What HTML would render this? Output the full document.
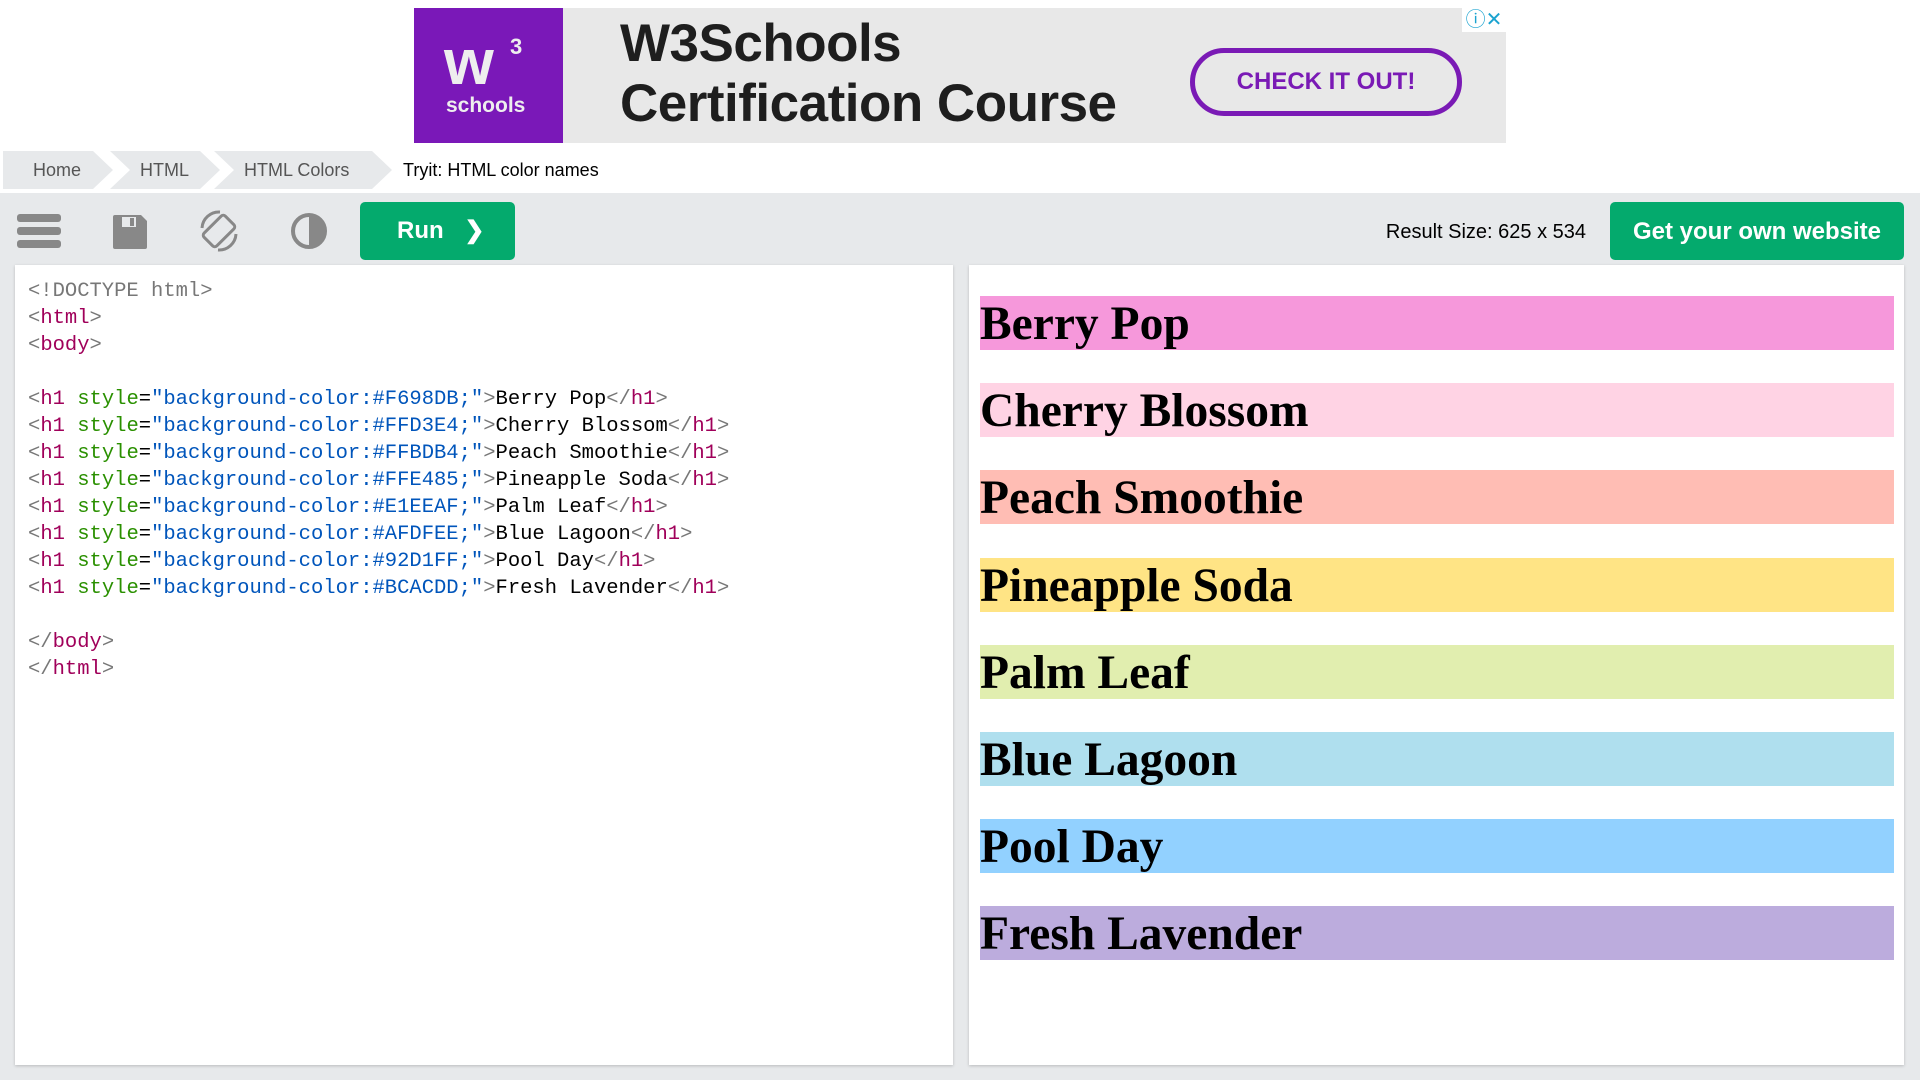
<!DOCTYPE html>
<html><head><style>
*{box-sizing:border-box;margin:0;padding:0}
body{width:1920px;height:1080px;background:#fff;position:relative;overflow:hidden;font-family:"Liberation Sans",sans-serif}
.abs{position:absolute}
.ad{left:414px;top:8px;width:1092px;height:135px;background:#e8e8e8}
.bc{top:151px;height:38px;background:#e7e9eb;color:#555;font-size:18px;line-height:38px;padding-left:30px;clip-path:polygon(0 0,calc(100% - 20px) 0,100% 50%,calc(100% - 20px) 100%,0 100%,20px 50%)}
.tb{left:0;top:193px;width:1920px;height:887px;background:#e7e9eb}
.panel{background:#fff;top:265px;height:800px;box-shadow:0 1px 3px rgba(0,0,0,.2)}
.code{font-family:"Liberation Mono",monospace;font-size:20.5px;line-height:27px;white-space:pre;color:#000;left:28px;top:278px}
.b{color:#777}.t{color:#a0005a}.a{color:#2a9000}.v{color:#0055bb}
.h{left:980px;width:914px;height:54px;font-family:"Liberation Serif",serif;font-weight:bold;font-size:47.5px;line-height:57px;color:#000}
</style></head><body>
<div class="abs ad">
 <div class="abs" style="left:0;top:0;width:149px;height:135px;background:#7a18b8;color:#eee">
  <div class="abs" style="left:30px;top:22px;font-weight:bold;font-size:64px;line-height:64px;letter-spacing:-4px">w</div>
  <div class="abs" style="left:96px;top:26px;font-weight:bold;font-size:22px">3</div>
  <div class="abs" style="left:32px;top:86px;font-weight:bold;font-size:21px">schools</div>
 </div>
 <div class="abs" style="left:206px;top:6px;font-weight:bold;font-size:53px;line-height:60px;color:#1e1e1e;letter-spacing:-0.5px">W3Schools<br>Certification Course</div>
 <div class="abs" style="left:776px;top:40px;width:272px;height:68px;border:5px solid #7a1ab5;border-radius:34px;color:#7a1ab5;font-weight:bold;font-size:24px;text-align:center;line-height:58px">CHECK IT OUT!</div>
 <div class="abs" style="left:1048px;top:0;width:44px;height:24px;background:#fff;color:#1aa3d0;font-size:20px;line-height:24px;text-align:center">ⓘ✕</div>
</div>
<div class="abs bc" style="left:3px;width:110px;clip-path:polygon(0 0,calc(100% - 20px) 0,100% 50%,calc(100% - 20px) 100%,0 100%)">Home</div>
<div class="abs bc" style="left:110px;width:110px">HTML</div>
<div class="abs bc" style="left:214px;width:178px">HTML Colors</div>
<div class="abs" style="left:403px;top:151px;line-height:38px;font-size:18px;color:#000">Tryit: HTML color names</div>
<div class="abs tb"></div>
<div class="abs" style="left:17px;top:214px;width:44px;height:8px;background:#777;border-radius:3px;opacity:.85"></div>
<div class="abs" style="left:17px;top:227px;width:44px;height:8px;background:#777;border-radius:3px;opacity:.85"></div>
<div class="abs" style="left:17px;top:240px;width:44px;height:8px;background:#777;border-radius:3px;opacity:.85"></div>
<svg class="abs" style="left:110px;top:212px" width="40" height="40" viewBox="0 0 40 40"><path d="M5 3h26l6 6v26a2 2 0 0 1-2 2H5a2 2 0 0 1-2-2V5a2 2 0 0 1 2-2z" fill="#888"/><rect x="12" y="5" width="14" height="10" fill="#e7e9eb"/><rect x="20" y="6" width="4" height="8" fill="#888"/></svg>
<svg class="abs" style="left:196px;top:208px" width="46" height="46" viewBox="0 0 46 46"><rect x="14" y="8" width="18" height="30" rx="3" transform="rotate(45 23 23)" fill="none" stroke="#888" stroke-width="3"/><path d="M6 20A17 17 0 0 1 24 4M40 26A17 17 0 0 1 22 42" fill="none" stroke="#888" stroke-width="3"/></svg>
<svg class="abs" style="left:289px;top:211px" width="40" height="40" viewBox="0 0 40 40"><circle cx="20" cy="20" r="16" fill="none" stroke="#888" stroke-width="4"/><path d="M20 4a16 16 0 0 1 0 32z" fill="#888"/></svg>
<div class="abs" style="left:360px;top:202px;width:155px;height:58px;background:#04aa6d;border-radius:5px;color:#fff;font-weight:bold;font-size:24px;line-height:58px;padding-left:37px">Run <span style="margin-left:14px">❯</span></div>
<div class="abs" style="left:1300px;top:203px;width:286px;text-align:right;font-size:20px;line-height:58px;color:#000">Result Size: 625 x 534</div>
<div class="abs" style="left:1610px;top:202px;width:294px;height:58px;background:#04aa6d;border-radius:5px;color:#fff;font-weight:bold;font-size:24px;line-height:60px;text-align:center">Get your own website</div>
<div class="abs panel" style="left:15px;width:938px"></div>
<div class="abs panel" style="left:969px;width:935px"></div>
<div class="abs code"><span class="b">&lt;!DOCTYPE html&gt;</span>
<span class="b">&lt;</span><span class="t">html</span><span class="b">&gt;</span>
<span class="b">&lt;</span><span class="t">body</span><span class="b">&gt;</span>

<span class="b">&lt;</span><span class="t">h1</span> <span class="a">style</span>=<span class="v">"background-color:#F698DB;"</span><span class="b">&gt;</span>Berry Pop<span class="b">&lt;/</span><span class="t">h1</span><span class="b">&gt;</span>
<span class="b">&lt;</span><span class="t">h1</span> <span class="a">style</span>=<span class="v">"background-color:#FFD3E4;"</span><span class="b">&gt;</span>Cherry Blossom<span class="b">&lt;/</span><span class="t">h1</span><span class="b">&gt;</span>
<span class="b">&lt;</span><span class="t">h1</span> <span class="a">style</span>=<span class="v">"background-color:#FFBDB4;"</span><span class="b">&gt;</span>Peach Smoothie<span class="b">&lt;/</span><span class="t">h1</span><span class="b">&gt;</span>
<span class="b">&lt;</span><span class="t">h1</span> <span class="a">style</span>=<span class="v">"background-color:#FFE485;"</span><span class="b">&gt;</span>Pineapple Soda<span class="b">&lt;/</span><span class="t">h1</span><span class="b">&gt;</span>
<span class="b">&lt;</span><span class="t">h1</span> <span class="a">style</span>=<span class="v">"background-color:#E1EEAF;"</span><span class="b">&gt;</span>Palm Leaf<span class="b">&lt;/</span><span class="t">h1</span><span class="b">&gt;</span>
<span class="b">&lt;</span><span class="t">h1</span> <span class="a">style</span>=<span class="v">"background-color:#AFDFEE;"</span><span class="b">&gt;</span>Blue Lagoon<span class="b">&lt;/</span><span class="t">h1</span><span class="b">&gt;</span>
<span class="b">&lt;</span><span class="t">h1</span> <span class="a">style</span>=<span class="v">"background-color:#92D1FF;"</span><span class="b">&gt;</span>Pool Day<span class="b">&lt;/</span><span class="t">h1</span><span class="b">&gt;</span>
<span class="b">&lt;</span><span class="t">h1</span> <span class="a">style</span>=<span class="v">"background-color:#BCACDD;"</span><span class="b">&gt;</span>Fresh Lavender<span class="b">&lt;/</span><span class="t">h1</span><span class="b">&gt;</span>

<span class="b">&lt;/</span><span class="t">body</span><span class="b">&gt;</span>
<span class="b">&lt;/</span><span class="t">html</span><span class="b">&gt;</span></div>
<div class="abs h" style="top:296px;background:#F698DB">Berry Pop</div>
<div class="abs h" style="top:383px;background:#FFD3E4">Cherry Blossom</div>
<div class="abs h" style="top:470px;background:#FFBDB4">Peach Smoothie</div>
<div class="abs h" style="top:558px;background:#FFE485">Pineapple Soda</div>
<div class="abs h" style="top:645px;background:#E1EEAF">Palm Leaf</div>
<div class="abs h" style="top:732px;background:#AFDFEE">Blue Lagoon</div>
<div class="abs h" style="top:819px;background:#92D1FF">Pool Day</div>
<div class="abs h" style="top:906px;background:#BCACDD">Fresh Lavender</div>
</body></html>
